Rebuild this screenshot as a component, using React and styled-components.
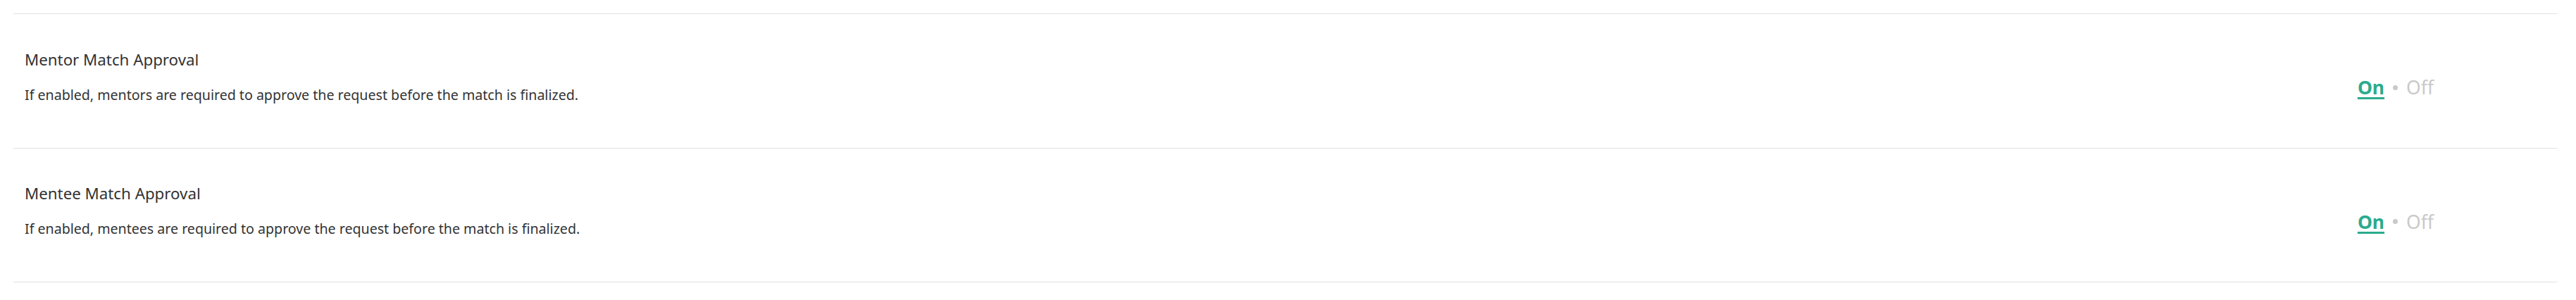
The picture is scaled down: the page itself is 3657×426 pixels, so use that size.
import styled, { createGlobalStyle } from "styled-components";
import { useState } from "react";

const GlobalStyle = createGlobalStyle`
  body {
    margin: 0;
    background: #ffffff;
    font-family: "Segoe UI", "Noto Sans", "Open Sans", sans-serif;
    color: #323232;
  }
`;

const Page = styled.div`
  padding: 19px 27px 0 19px;
`;

const List = styled.div`
  border-top: 1px solid #e1e1e1;
`;

const Row = styled.div`
  height: 190.5px;
  box-sizing: border-box;
  display: flex;
  align-items: center;
  justify-content: space-between;
  padding: 0 175px 0 16px;
  border-bottom: 1px solid #e1e1e1;
`;

const Info = styled.div`
  display: flex;
  flex-direction: column;
  gap: 22px;
  margin-top: -12px;
`;

const Title = styled.div`
  font-size: 22.3px;
  line-height: 30px;
  color: #333333;
`;

const Description = styled.div`
  font-size: 19.6px;
  line-height: 26px;
  color: #333333;
`;

const Toggle = styled.div`
  display: flex;
  align-items: baseline;
  gap: 12px;
  font-size: 26.5px;
  margin-top: 19px;
`;

const Option = styled.span`
  cursor: pointer;
  color: ${({ $active }) => ($active ? "#2bab8d" : "#c9c9c9")};
  font-weight: ${({ $active }) => ($active ? 700 : 400)};
  text-decoration: ${({ $active }) => ($active ? "underline" : "none")};
  text-decoration-thickness: 3px;
  text-underline-offset: 4px;
`;

const Dot = styled.span`
  width: 7px;
  height: 7px;
  border-radius: 50%;
  background: #c9c9c9;
  align-self: center;
`;

const settings = [
  {
    id: "mentor",
    title: "Mentor Match Approval",
    text: "If enabled, mentors are required to approve the request before the match is finalized.",
  },
  {
    id: "mentee",
    title: "Mentee Match Approval",
    text: "If enabled, mentees are required to approve the request before the match is finalized.",
  },
];

function Setting({ title, text }) {
  const [isOn, setIsOn] = useState(true);
  return (
    <Row>
      <Info>
        <Title>{title}</Title>
        <Description>{text}</Description>
      </Info>
      <Toggle>
        <Option $active={isOn} onClick={() => setIsOn(true)}>
          On
        </Option>
        <Dot />
        <Option $active={!isOn} onClick={() => setIsOn(false)}>
          Off
        </Option>
      </Toggle>
    </Row>
  );
}

export default function App() {
  return (
    <>
      <GlobalStyle />
      <Page>
        <List>
          {settings.map((s) => (
            <Setting key={s.id} title={s.title} text={s.text} />
          ))}
        </List>
      </Page>
    </>
  );
}
